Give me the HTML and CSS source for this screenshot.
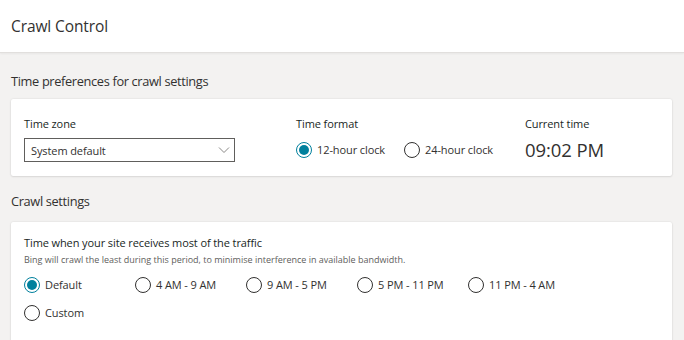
FILE: index.html
```html
<!DOCTYPE html>
<html lang="en">
<head>
    <meta charset="UTF-8">
    <meta name="viewport" content="width=device-width, initial-scale=1.0">
    <title>Crawl Control</title>
    <link rel="stylesheet" href="styles.css">
</head>
<body>
    <header class="page-header">
        <h1>Crawl Control</h1>
    </header>
    <main class="content">
        <section>
            <h2 class="section-title">Time preferences for crawl settings</h2>
            <div class="card time-card">
                <div class="field">
                    <div class="field-label">Time zone</div>
                    <div class="select">
                        <span>System default</span>
                        <svg class="chevron" width="12" height="8" viewBox="0 0 12 8"><path d="M1 1.5 L6 6.5 L11 1.5" fill="none" stroke="#8a8886" stroke-width="1"/></svg>
                    </div>
                </div>
                <div class="field">
                    <div class="field-label">Time format</div>
                    <div class="radio-row">
                        <label class="radio checked"><span class="dot"></span>12-hour clock</label>
                        <label class="radio"><span class="dot"></span>24-hour clock</label>
                    </div>
                </div>
                <div class="field">
                    <div class="field-label">Current time</div>
                    <div class="clock">09:02 PM</div>
                </div>
            </div>
        </section>
        <section>
            <h2 class="section-title second">Crawl settings</h2>
            <div class="card traffic-card">
                <div class="card-heading">Time when your site receives most of the traffic</div>
                <div class="card-note">Bing will crawl the least during this period, to minimise interference in available bandwidth.</div>
                <div class="radio-grid">
                    <label class="radio checked"><span class="dot"></span>Default</label>
                    <label class="radio"><span class="dot"></span>4 AM - 9 AM</label>
                    <label class="radio"><span class="dot"></span>9 AM - 5 PM</label>
                    <label class="radio"><span class="dot"></span>5 PM - 11 PM</label>
                    <label class="radio"><span class="dot"></span>11 PM - 4 AM</label>
                    <label class="radio"><span class="dot"></span>Custom</label>
                </div>
            </div>
        </section>
    </main>
</body>
</html>
```

FILE: styles.css
```css
body {
    margin: 0;
    font-family: "Open Sans", "Noto Sans", sans-serif;
    color: #323130;
    background-color: #f3f2f1;
    overflow: hidden;
}
.page-header {
    height: 52px;
    background: white;
    border-bottom: 1px solid #e1dfdd;
    box-shadow: 0 1px 2px rgba(0,0,0,0.05);
    display: flex;
    align-items: center;
    padding-left: 11px;
}
h1 {
    margin: 0;
    font-size: 15.5px;
    font-weight: 400;
    line-height: 20px;
    letter-spacing: -0.1px;
}
.content {
    padding: 0 12px 0 11px;
}
.section-title {
    margin: 18px 0 8px;
    font-size: 12.8px;
    font-weight: 400;
    line-height: 20px;
    letter-spacing: -0.35px;
}
.section-title.second {
    margin: 15px 0 11px;
}
.card {
    background: white;
    border-radius: 2px;
    box-shadow: 0 0 2px rgba(0,0,0,0.12), 0 1px 2px rgba(0,0,0,0.08);
    padding: 0 13px;
}
.time-card {
    display: grid;
    grid-template-columns: 272px 229px 1fr;
    padding-top: 17px;
    padding-bottom: 14px;
}
.field-label {
    font-size: 11px;
    line-height: 16px;
    margin-bottom: 6px;
    letter-spacing: -0.1px;
    color: #201f1e;
}
.select {
    width: 203px;
    height: 22px;
    border: 1px solid #605e5c;
    display: flex;
    align-items: center;
    justify-content: space-between;
    padding: 0 0 0 6px;
    box-sizing: content-box;
    font-size: 11px;
    letter-spacing: -0.1px;
}
.chevron {
    margin-right: 4px;
}
.radio-row {
    display: flex;
    gap: 19px;
    height: 24px;
    align-items: center;
}
.radio {
    display: flex;
    align-items: center;
    font-size: 11px;
    line-height: 16px;
    letter-spacing: -0.1px;
    white-space: nowrap;
}
.dot {
    width: 14px;
    height: 14px;
    border: 1px solid #323130;
    border-radius: 50%;
    margin-right: 5px;
    box-sizing: content-box;
    display: flex;
    align-items: center;
    justify-content: center;
}
.radio.checked .dot {
    border-color: #00809d;
}
.radio.checked .dot::after {
    content: "";
    width: 10px;
    height: 10px;
    border-radius: 50%;
    background: #00809d;
}
.clock {
    font-size: 18.5px;
    line-height: 24px;
    letter-spacing: -0.1px;
}
.traffic-card {
    padding-top: 13px;
    height: 120px;
}
.card-heading {
    font-size: 11px;
    line-height: 16px;
    letter-spacing: -0.1px;
    color: #201f1e;
}
.card-note {
    font-size: 9px;
    line-height: 14px;
    color: #605e5c;
    margin-top: 2px;
}
.radio-grid {
    display: grid;
    grid-template-columns: repeat(5, 111px);
    grid-auto-rows: 28px;
    margin-top: 4px;
}
```
